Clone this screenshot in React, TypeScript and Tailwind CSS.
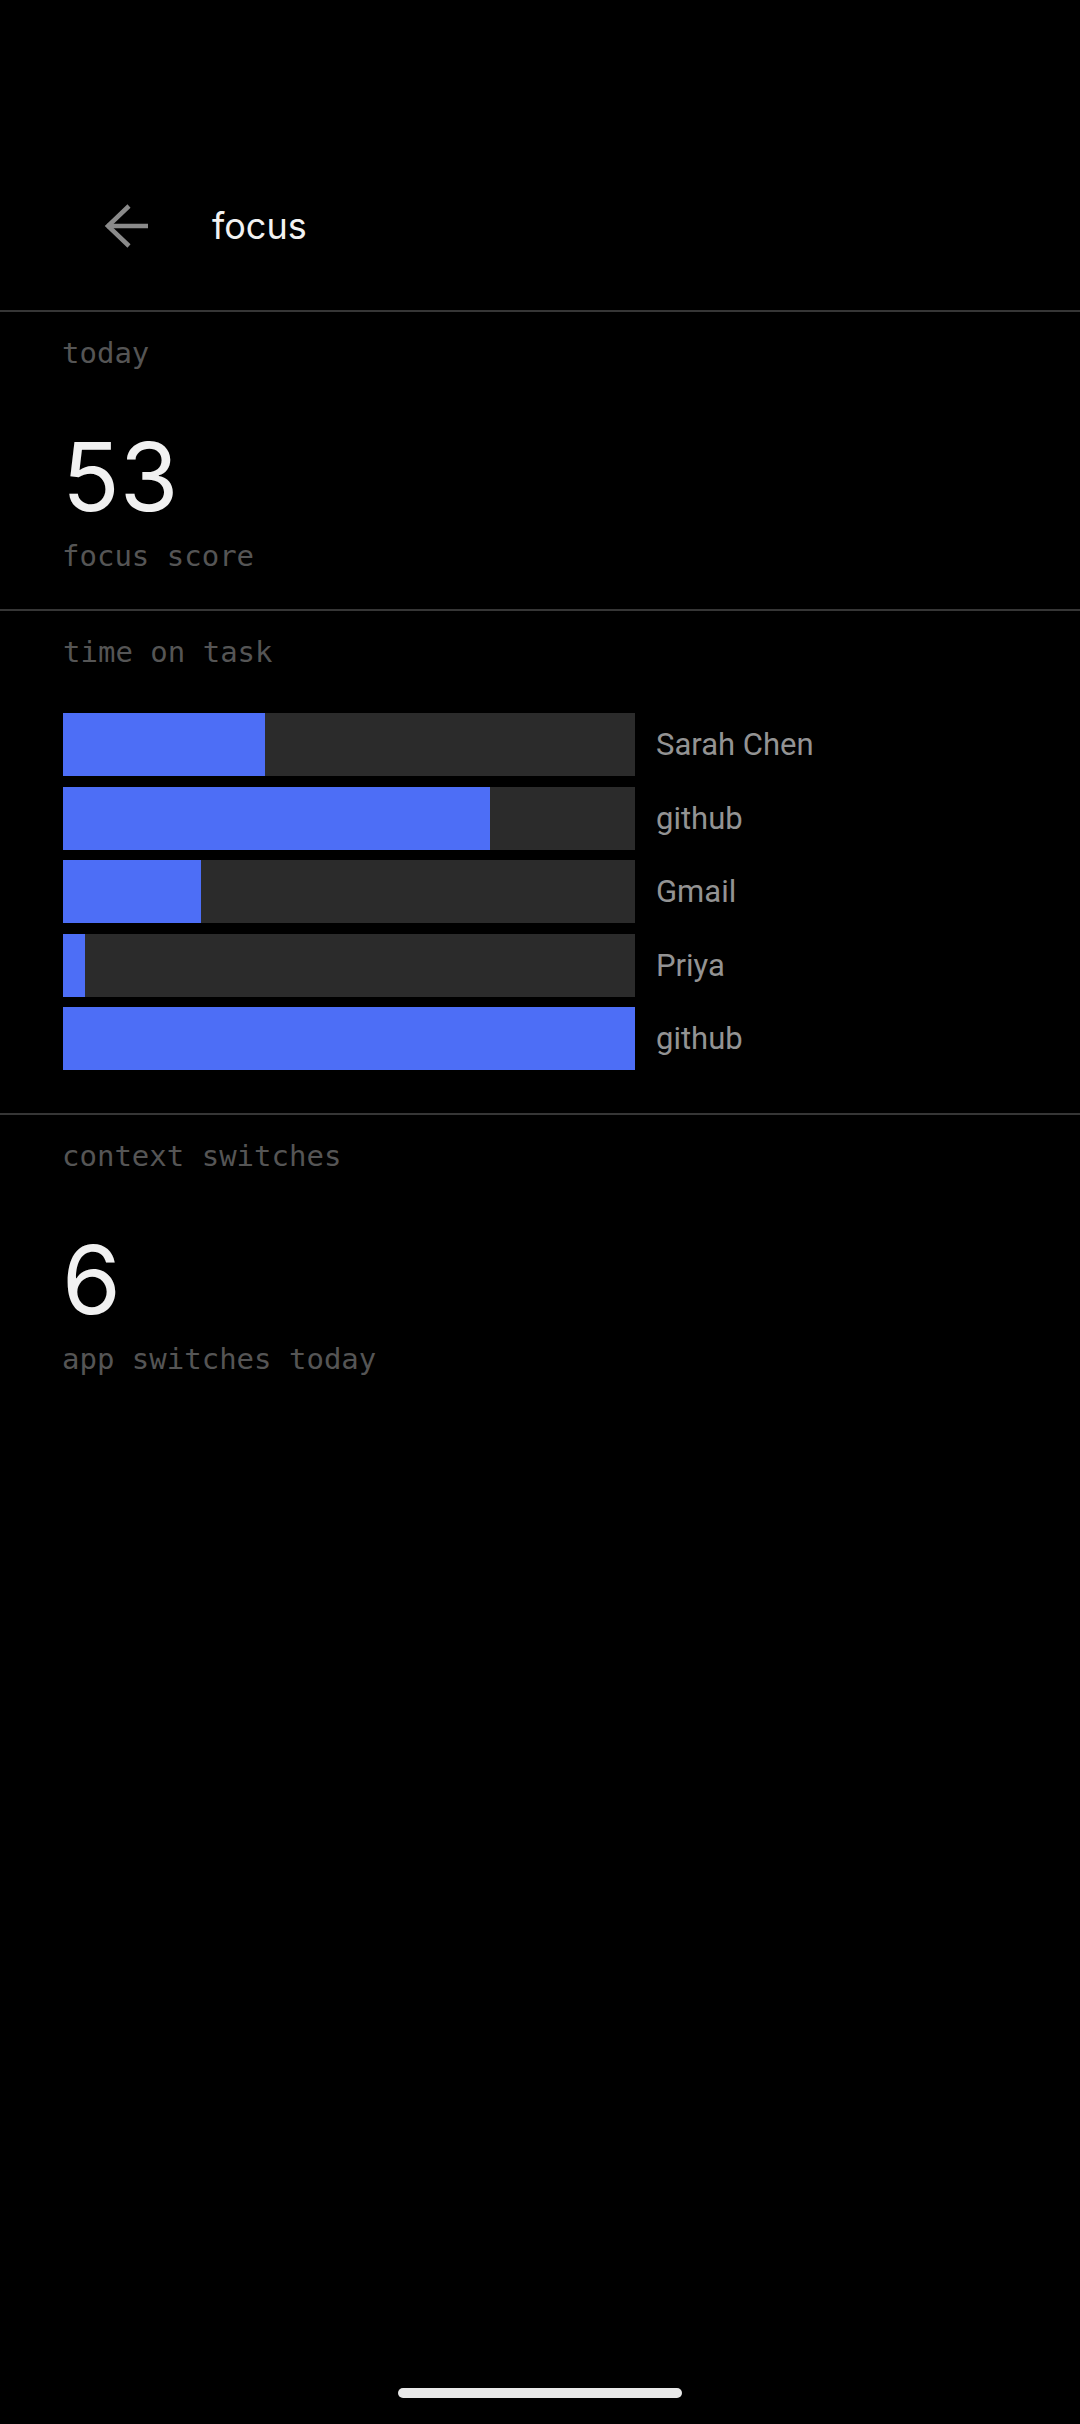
const bars = [
  { label: 'Sarah Chen', pct: 35.4 },
  { label: 'github', pct: 74.7 },
  { label: 'Gmail', pct: 24.1 },
  { label: 'Priya', pct: 3.8 },
  { label: 'github', pct: 100 },
]

function BackArrow() {
  return (
    <svg width="44" height="44" viewBox="0 0 44 44" fill="none" stroke="#8a8a8a" strokeWidth="4.5">
      <path d="M3 22H44" />
      <path d="M25 2L4 22L25 42" strokeLinejoin="miter" />
    </svg>
  )
}

function Label({ children }: { children: React.ReactNode }) {
  return (
    <p className="font-['DejaVu_Sans_Mono',monospace] text-[29px] leading-[29px] text-[#555555]">
      {children}
    </p>
  )
}

function Divider() {
  return <div className="h-[2px] bg-[#363636]" />
}

function Stat({ title, value, caption }: { title: string; value: string; caption: string }) {
  return (
    <section className="pl-[62px] pt-[27px] pb-[38px]">
      <Label>{title}</Label>
      <p className="mt-[61px] font-['Inter',sans-serif] text-[95px] leading-none text-[#f1f1f1]">
        {value}
      </p>
      <div className="mt-[18px]">
        <Label>{caption}</Label>
      </div>
    </section>
  )
}

export default function App() {
  return (
    <main className="w-full h-[2424px] bg-black flex flex-col overflow-hidden">
      <header className="pt-[204px] pb-[62px] pl-[104px] flex items-center h-[310px] box-border">
        <div className="h-[44px] flex items-center gap-[64px]">
          <BackArrow />
          <h1 className="font-['Inter',sans-serif] text-[36px] leading-none text-[#f2f2f2]">focus</h1>
        </div>
      </header>

      <Divider />
      <Stat title="today" value="53" caption="focus score" />
      <Divider />

      <section className="pl-[63px] pt-[27px] pb-[43px]">
        <Label>time on task</Label>
        <div className="mt-[46px] flex flex-col gap-[10.5px]">
          {bars.map((b, i) => (
            <div key={i} className="flex items-center gap-[21px]">
              <div className="w-[572px] h-[63px] bg-[#2b2b2b]">
                <div className="h-full bg-[#4d6ef6]" style={{ width: `${b.pct}%` }} />
              </div>
              <span className="font-['Roboto',sans-serif] text-[31px] leading-none text-[#939393]">
                {b.label}
              </span>
            </div>
          ))}
        </div>
      </section>

      <Divider />
      <Stat title="context switches" value="6" caption="app switches today" />

      <div className="flex-1" />
      <div className="mx-auto mb-[26px] w-[284px] h-[10px] rounded-full bg-[#e8e8e8]" />
    </main>
  )
}
